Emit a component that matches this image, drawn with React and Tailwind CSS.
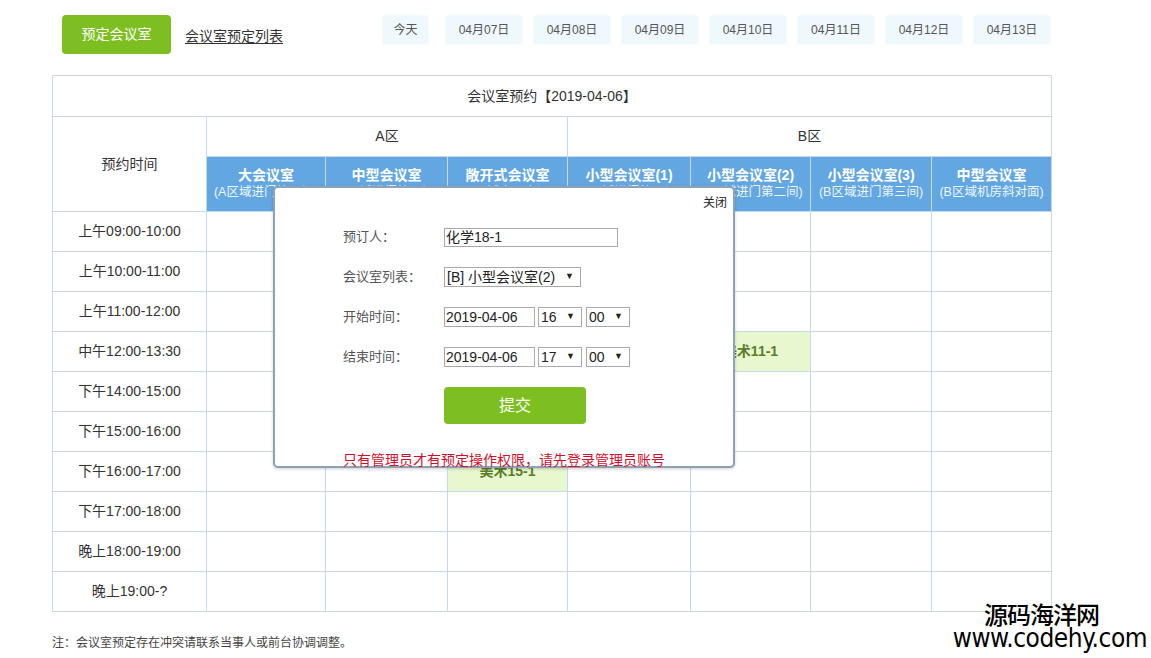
import React from 'react';

const dates = ['04月07日', '04月08日', '04月09日', '04月10日', '04月11日', '04月12日', '04月13日'];

const rooms = [
  { name: '大会议室', sub: '(A区域进门第一间)' },
  { name: '中型会议室', sub: '(A区域进门第二间)' },
  { name: '敞开式会议室', sub: '(A区域大厅中间)' },
  { name: '小型会议室(1)', sub: '(B区域进门第一间)' },
  { name: '小型会议室(2)', sub: '(B区域进门第二间)' },
  { name: '小型会议室(3)', sub: '(B区域进门第三间)' },
  { name: '中型会议室', sub: '(B区域机房斜对面)' },
];

const times = [
  '上午09:00-10:00', '上午10:00-11:00', '上午11:00-12:00', '中午12:00-13:30',
  '下午14:00-15:00', '下午15:00-16:00', '下午16:00-17:00', '下午17:00-18:00',
  '晚上18:00-19:00', '晚上19:00-?',
];

// booked cells: "row-col" -> who booked
const booked = { '3-4': '美术11-1', '6-2': '美术15-1' };

const colWidths = ['w-[154px]', 'w-[119px]', 'w-[122px]', 'w-[120px]', 'w-[123px]', 'w-[120px]', 'w-[121px]', 'w-[120px]'];

function FakeSelect({ value, w }) {
  return (
    <div className={`${w} h-[20px] border border-[#a9a9a9] bg-white flex items-center justify-between pl-[2px] pr-[6px] text-[14px] text-[#222]`}>
      <span>{value}</span>
      <span className="text-[9px]">▼</span>
    </div>
  );
}

export default function App() {
  return (
    <div className="relative w-[1151px] h-[658px] bg-white overflow-hidden font-['Liberation_Sans','Noto_Sans_CJK_SC',sans-serif] text-[#333]">
      <div className="ml-[52px] w-[1000px] pt-[15px]">
        {/* top bar */}
        <div className="flex items-start">
          <button className="ml-[10px] w-[109px] h-[39px] rounded-[4px] bg-[#7dbf21] text-white text-[14px]">预定会议室</button>
          <a className="ml-[14px] mt-[11px] text-[14px] text-[#333] underline underline-offset-2">会议室预定列表</a>
          <div className="ml-[100px] mt-[1px] flex">
            <div className="w-[45px] h-[28px] bg-[#eef8fd] shadow-[0_0_3px_#e6f4fb] flex items-center justify-center text-[12px] text-[#555]">今天</div>
            {dates.map((d, i) => (
              <div key={d} className={`${i === 0 ? 'ml-[18px]' : 'ml-[12px]'} w-[76px] h-[28px] bg-[#eef8fd] shadow-[0_0_3px_#e6f4fb] flex items-center justify-center text-[12px] text-[#555]`}>{d}</div>
            ))}
          </div>
        </div>

        {/* schedule table */}
        <table className="mt-[21px] w-[1000px] table-fixed border-collapse border border-[#c6d9e8] text-[14px]">
          <colgroup>
            {colWidths.map((w, i) => <col key={i} className={w} />)}
          </colgroup>
          <tbody>
            <tr className="h-[41px]">
              <td colSpan={8} className="border border-[#c6d9e8] text-center">会议室预约【2019-04-06】</td>
            </tr>
            <tr className="h-[40px]">
              <td rowSpan={2} className="border border-[#c6d9e8] text-center">预约时间</td>
              <td colSpan={3} className="border border-[#c6d9e8] text-center">A区</td>
              <td colSpan={4} className="border border-[#c6d9e8] text-center">B区</td>
            </tr>
            <tr className="h-[55px]">
              {rooms.map((r, i) => (
                <td key={i} className="border border-[#c6d9e8] bg-[#62a7e1] text-center text-white leading-[17px] px-0">
                  <div className="font-bold text-[14px]">{r.name}</div>
                  <div className="text-[12.5px] text-[#eef5fc] whitespace-nowrap">{r.sub}</div>
                </td>
              ))}
            </tr>
            {times.map((t, ri) => (
              <tr key={t} className="h-[40px]">
                <td className="border border-[#c6d9e8] text-center">{t}</td>
                {rooms.map((_, ci) => {
                  const who = booked[`${ri}-${ci}`];
                  return (
                    <td key={ci} className={`border border-[#c6d9e8] text-center ${who ? 'bg-[#e7f8cf] font-bold text-[#5a7d2a]' : ''}`}>
                      {who || ''}
                    </td>
                  );
                })}
              </tr>
            ))}
          </tbody>
        </table>

        <p className="mt-[22px] text-[12px] text-[#444]">注：会议室预定存在冲突请联系当事人或前台协调调整。</p>
      </div>

      {/* booking dialog */}
      <div className="absolute left-[273px] top-[186px] w-[462px] h-[282px] bg-white border-2 border-[#8da2b6] rounded-[5px] shadow-[0_1px_3px_rgba(0,0,0,0.2)]">
        <div className="h-[29px] flex items-center justify-end pr-[6px] text-[12px] text-[#222]">关闭</div>
        <div className="pl-[68px] text-[13px] text-[#555]">
          <div className="h-[40px] flex items-center">
            <span className="w-[101px]">预订人：</span>
            <div className="w-[174px] h-[19px] border border-[#a9a9a9] flex items-center pl-[1px] text-[14px] text-[#222]">化学18-1</div>
          </div>
          <div className="h-[40px] flex items-center">
            <span className="w-[101px]">会议室列表：</span>
            <FakeSelect value="[B] 小型会议室(2)" w="w-[137px]" />
          </div>
          {[['开始时间：', '16'], ['结束时间：', '17']].map(([label, hour]) => (
            <div key={label} className="h-[40px] flex items-center">
              <span className="w-[101px]">{label}</span>
              <div className="w-[91px] h-[20px] border border-[#a9a9a9] flex items-center pl-[1px] text-[14px] text-[#222]">2019-04-06</div>
              <div className="ml-[3px]"><FakeSelect value={hour} w="w-[44px]" /></div>
              <div className="ml-[4px]"><FakeSelect value="00" w="w-[44px]" /></div>
            </div>
          ))}
          <button className="mt-[10px] ml-[101px] w-[142px] h-[37px] rounded-[4px] bg-[#7dbf21] text-white text-[16px]">提交</button>
          <p className="mt-[28px] text-[14px] leading-[16px] text-[#d0102a]">只有管理员才有预定操作权限，请先登录管理员账号</p>
        </div>
      </div>

      {/* watermark */}
      <div className="absolute right-[4px] top-[602px] flex flex-col items-end text-black leading-[24px]">
        <span className="mr-[48px] text-[24px] font-['Noto_Sans_CJK_SC',sans-serif] font-medium tracking-[-1px]">源码海洋网</span>
        <span className="text-[26px] font-['Liberation_Sans_Narrow','DejaVu_Sans_Condensed',sans-serif] tracking-[-0.5px]">www.codehy.com</span>
      </div>
    </div>
  );
}
